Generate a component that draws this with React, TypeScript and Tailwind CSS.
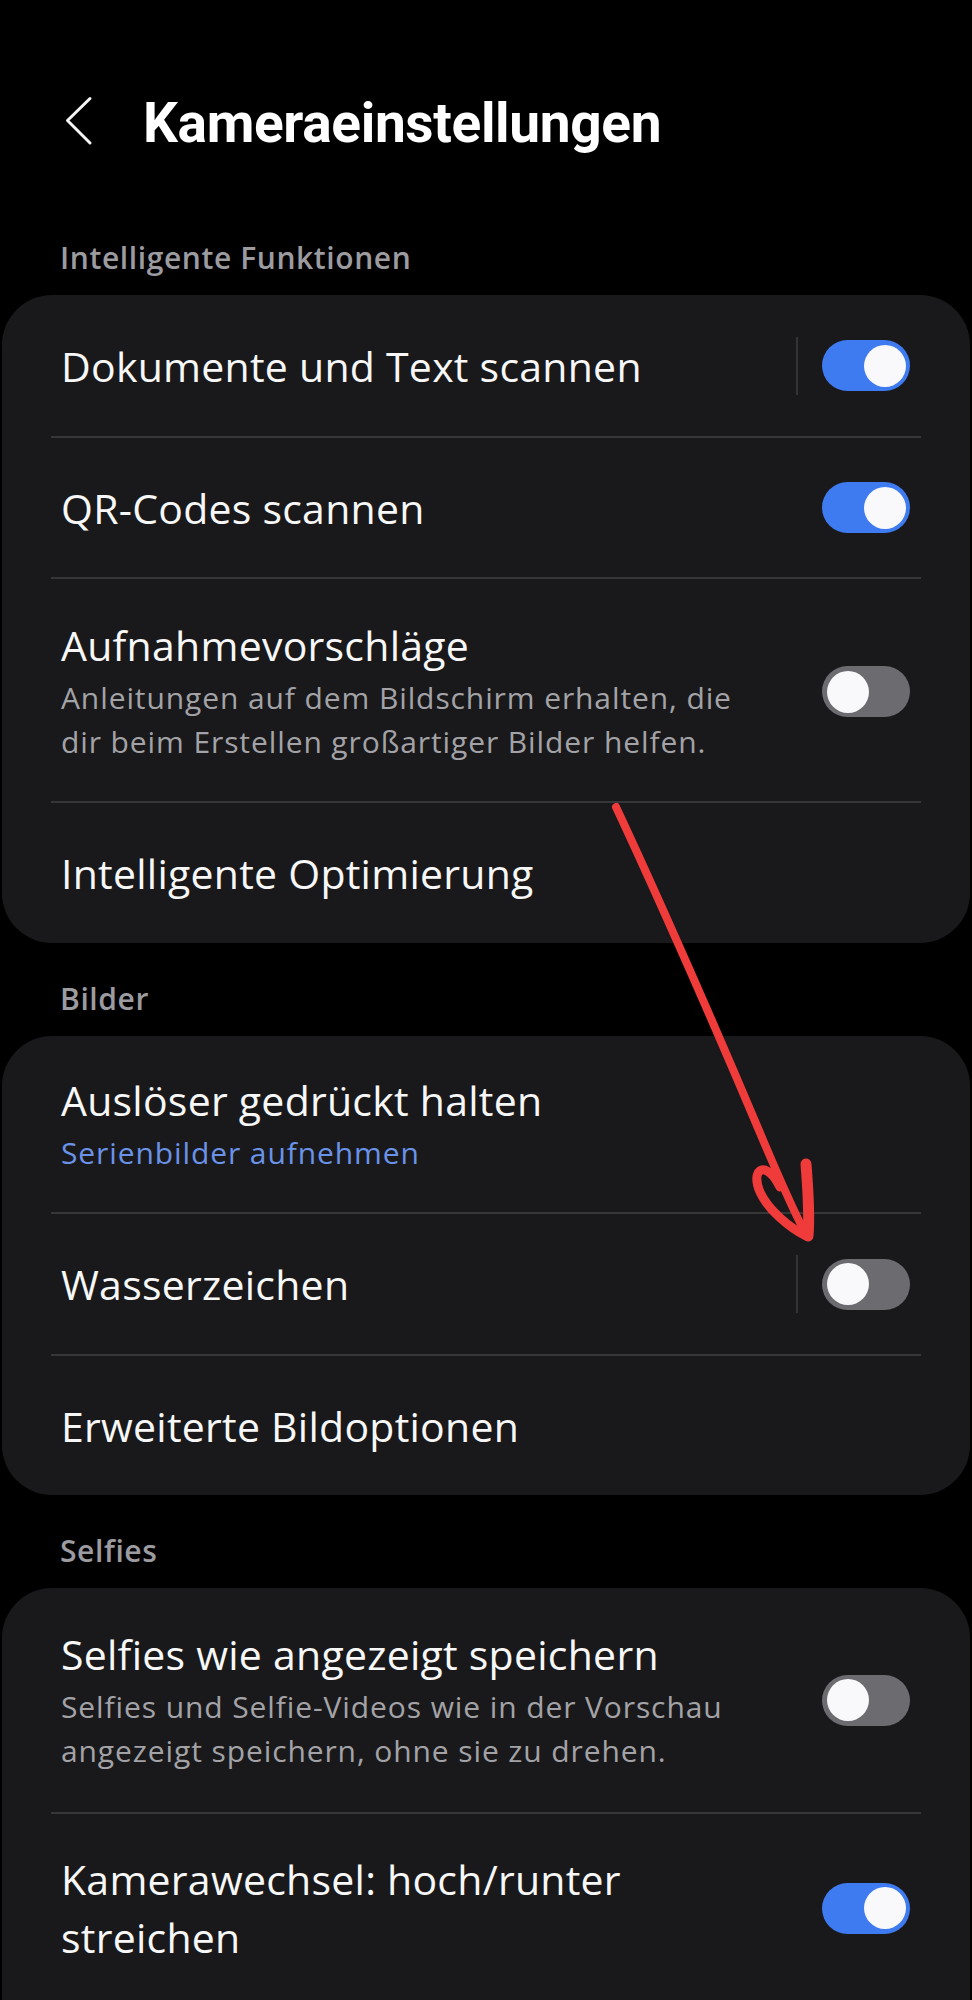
import React from "react";

type RowProps = {
  title: React.ReactNode;
  subtitle?: React.ReactNode;
  blue?: boolean;
  toggle?: "on" | "off";
  sep?: boolean;
  heightClass: string;
  titleLeading?: string;
};

function Toggle({ on }: { on: boolean }) {
  return (
    <div
      className={
        on
          ? "flex h-[51px] w-[88px] shrink-0 items-center justify-end rounded-full bg-[#3e7af0] px-[4px]"
          : "flex h-[51px] w-[88px] shrink-0 items-center justify-start rounded-full bg-[#6b6b70] px-[5px]"
      }
    >
      <div className="h-[42px] w-[42px] rounded-full bg-[#f9f9fb]" />
    </div>
  );
}

function Row({ title, subtitle, blue, toggle, sep, heightClass, titleLeading }: RowProps) {
  return (
    <div className={`flex items-center pl-[59px] pr-[60px] ${heightClass}`}>
      <div className="flex min-w-0 flex-1 flex-col">
        <div
          className={`whitespace-nowrap text-[41px] tracking-[0.25px] text-[#f7f7f7] ${
            titleLeading ?? "leading-[52px]"
          }`}
        >
          {title}
        </div>
        {subtitle && (
          <div
            className={
              blue
                ? "mt-[5px] whitespace-nowrap text-[30px] leading-[44px] tracking-[0.9px] text-[#6a93e8]"
                : "mt-[5px] whitespace-nowrap text-[30px] leading-[44px] tracking-[0.9px] text-[#a3a3a7]"
            }
          >
            {subtitle}
          </div>
        )}
      </div>
      {sep && <div className="mr-[24px] h-[58px] w-[2px] bg-[#333335]" />}
      {toggle && <Toggle on={toggle === "on"} />}
    </div>
  );
}

function Divider() {
  return <div className="mx-[49px] h-[2px] bg-[#363638]" />;
}

function SectionHeader({ children, first }: { children: React.ReactNode; first?: boolean }) {
  return (
    <div
      className={`${
        first ? "pt-[83px]" : "pt-[36px]"
      } mb-[17px] pl-[60px] text-[30px] font-semibold leading-[40px] tracking-[0.6px] text-[#9c9ca0]`}
    >
      {children}
    </div>
  );
}

export default function App() {
  return (
    <div className="relative h-[2000px] w-[972px] overflow-hidden bg-black font-['Open_Sans',sans-serif]">
      <div className="pt-[91px]">
        <div className="flex h-[64px] items-center">
          <svg className="ml-[64px] shrink-0" width="30" height="64" viewBox="0 0 30 64" fill="none">
            <path
              d="M26 7.5 L3.5 29.5 L26 52"
              stroke="#f5f5f5"
              strokeWidth="3"
              strokeLinecap="round"
              strokeLinejoin="round"
            />
          </svg>
          <div className="ml-[49px] font-['Roboto',sans-serif] text-[55px] font-bold leading-[64px] tracking-[-0.35px] text-white">
            Kameraeinstellungen
          </div>
        </div>

        <SectionHeader first>Intelligente Funktionen</SectionHeader>
        <div className="mx-[2px] overflow-hidden rounded-[50px] bg-[#19191b]">
          <Row title="Dokumente und Text scannen" toggle="on" sep heightClass="h-[141px]" />
          <Divider />
          <Row title="QR-Codes scannen" toggle="on" heightClass="h-[139px]" />
          <Divider />
          <Row
            title="Aufnahmevorschläge"
            subtitle={
              <>
                Anleitungen auf dem Bildschirm erhalten, die
                <br />
                dir beim Erstellen großartiger Bilder helfen.
              </>
            }
            toggle="off"
            heightClass="h-[222px] pt-[3px]"
          />
          <Divider />
          <Row title="Intelligente Optimierung" heightClass="h-[140px]" />
        </div>

        <SectionHeader>Bilder</SectionHeader>
        <div className="mx-[2px] overflow-hidden rounded-[50px] bg-[#19191b]">
          <Row
            title="Auslöser gedrückt halten"
            subtitle="Serienbilder aufnehmen"
            blue
            heightClass="h-[176px]"
          />
          <Divider />
          <Row title="Wasserzeichen" toggle="off" sep heightClass="h-[140px]" />
          <Divider />
          <Row title="Erweiterte Bildoptionen" heightClass="h-[139px]" />
        </div>

        <SectionHeader>Selfies</SectionHeader>
        <div className="mx-[2px] overflow-hidden rounded-t-[50px] bg-[#19191b]">
          <Row
            title="Selfies wie angezeigt speichern"
            subtitle={
              <>
                Selfies und Selfie-Videos wie in der Vorschau
                <br />
                angezeigt speichern, ohne sie zu drehen.
              </>
            }
            toggle="off"
            heightClass="h-[224px]"
          />
          <Divider />
          <Row
            title={
              <>
                Kamerawechsel: hoch/runter
                <br />
                streichen
              </>
            }
            titleLeading="leading-[58px]"
            toggle="on"
            heightClass="h-[188px]"
          />
          <div className="h-[40px]" />
        </div>
      </div>

      {/* Red annotation arrow */}
      <svg
        className="pointer-events-none absolute left-0 top-0"
        width="972"
        height="2000"
        viewBox="0 0 972 2000"
        fill="none"
      >
        <path
          d="M616 807 C 640 858, 700 990, 763 1140 C 780 1180, 795 1215, 806 1234"
          stroke="#f03b3b"
          strokeWidth="8"
          strokeLinecap="round"
        />
        <path
          d="M806 1236 C 790 1228, 768 1210, 760 1192 C 754 1178, 757 1168, 765 1170 C 771 1172, 776 1179, 780 1187"
          stroke="#f03b3b"
          strokeWidth="9"
          strokeLinecap="round"
          strokeLinejoin="round"
        />
        <path
          d="M806 1164 C 808 1190, 810 1214, 808 1236"
          stroke="#f03b3b"
          strokeWidth="11"
          strokeLinecap="round"
        />
      </svg>
    </div>
  );
}
